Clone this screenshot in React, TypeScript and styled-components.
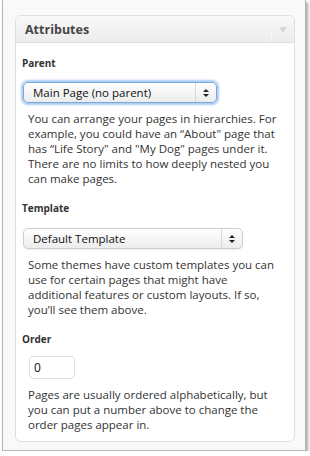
import styled, { createGlobalStyle } from "styled-components";

const GlobalStyle = createGlobalStyle`
  html, body {
    margin: 0;
    padding: 0;
    background: #ffffff;
  }
  body {
    font-family: "Open Sans", "Liberation Sans", sans-serif;
  }
`;

const Frame = styled.div`
  box-sizing: border-box;
  margin-left: 2px;
  width: 304px;
  height: 451px;
  background: #f9f9f9;
  border: 1px solid #b5b5b5;
  border-top: none;
  box-shadow: 2px 2px 3px rgba(0, 0, 0, 0.35);
  padding: 15px 10px 0 12px;
`;

const Box = styled.div`
  width: 280px;
  height: 427px;
  box-sizing: border-box;
  background: #ffffff;
  border: 1px solid #dfdfdf;
  border-radius: 6px;
  overflow: hidden;
`;

const Header = styled.div`
  display: flex;
  height: 26px;
  background: linear-gradient(#f9f9f9, #ececec);
  border-bottom: 1px solid #dfdfdf;
`;

const Title = styled.h3`
  flex: 1;
  margin: 0;
  padding: 0 9px;
  font-size: 12.5px;
  line-height: 27px;
  font-weight: bold;
  color: #464646;
`;

const Toggle = styled.div`
  width: 22px;
  border-left: 1px solid #f6f6f6;
  display: flex;
  align-items: center;
  justify-content: center;
`;

const Arrow = styled.span`
  width: 0;
  height: 0;
  border-left: 4px solid transparent;
  border-right: 4px solid transparent;
  border-top: 6px solid #d6d6d6;
  margin-top: 2px;
`;

const Inside = styled.div`
  padding: 12px 6px 0 6px;
`;

const Label = styled.p`
  margin: 0;
  font-size: 10px;
  font-weight: bold;
  color: #333;
  line-height: 16px;
`;

const Select = styled.div<{ $focused?: boolean; $width: number }>`
  box-sizing: border-box;
  width: ${({ $width }) => $width}px;
  height: 21px;
  margin: ${({ $focused }) => ($focused ? "11px 0 8px 1px" : "12px 0 8px 1px")};
  display: flex;
  align-items: center;
  border-radius: 5px;
  background: linear-gradient(#ffffff, #ececec);
  border: 1px solid ${({ $focused }) => ($focused ? "#7aa7d6" : "#cfcfcf")};
  box-shadow: ${({ $focused }) =>
    $focused ? "0 0 2px 2px rgba(100, 160, 230, 0.55)" : "0 1px 1px rgba(0,0,0,0.08)"};
  font-size: 11.5px;
  color: #111;
`;

const SelectText = styled.span`
  flex: 1;
  padding-left: 9px;
`;

const Spinner = styled.span`
  width: 20px;
  height: 100%;
  border-left: 1px solid #d8d8d8;
  display: flex;
  flex-direction: column;
  align-items: center;
  justify-content: center;
  gap: 2px;
`;

const Up = styled.i`
  width: 0;
  height: 0;
  border-left: 3px solid transparent;
  border-right: 3px solid transparent;
  border-bottom: 3px solid #222;
`;

const Down = styled.i`
  width: 0;
  height: 0;
  border-left: 3px solid transparent;
  border-right: 3px solid transparent;
  border-top: 3px solid #222;
`;

const Help = styled.p`
  margin: 0 0 14px 0;
  padding-left: 6px;
  font-size: 11.5px;
  line-height: 15px;
  color: #333;
  white-space: nowrap;
`;

const NumberInput = styled.div`
  box-sizing: border-box;
  width: 46px;
  height: 23px;
  margin: 9px 0 8px 7px;
  border: 1px solid #dfdfdf;
  border-radius: 4px;
  padding-left: 4px;
  font-size: 12px;
  line-height: 21px;
  color: #111;
`;

const SelectBox = ({ value, width, focused }: { value: string; width: number; focused?: boolean }) => (
  <Select $width={width} $focused={focused}>
    <SelectText>{value}</SelectText>
    <Spinner>
      <Up />
      <Down />
    </Spinner>
  </Select>
);

export default function App() {
  return (
    <>
      <GlobalStyle />
      <Frame>
        <Box>
          <Header>
            <Title>Attributes</Title>
            <Toggle>
              <Arrow />
            </Toggle>
          </Header>
          <Inside>
            <Label>Parent</Label>
            <SelectBox value="Main Page (no parent)" width={194} focused />
            <Help>
              You can arrange your pages in hierarchies. For
              <br />
              example, you could have an “About" page that
              <br />
              has “Life Story" and "My Dog" pages under it.
              <br />
              There are no limits to how deeply nested you
              <br />
              can make pages.
            </Help>
            <Label>Template</Label>
            <SelectBox value="Default Template" width={220} />
            <Help>
              Some themes have custom templates you can
              <br />
              use for certain pages that might have
              <br />
              additional features or custom layouts. If so,
              <br />
              you’ll see them above.
            </Help>
            <Label>Order</Label>
            <NumberInput>0</NumberInput>
            <Help>
              Pages are usually ordered alphabetically, but
              <br />
              you can put a number above to change the
              <br />
              order pages appear in.
            </Help>
          </Inside>
        </Box>
      </Frame>
    </>
  );
}
